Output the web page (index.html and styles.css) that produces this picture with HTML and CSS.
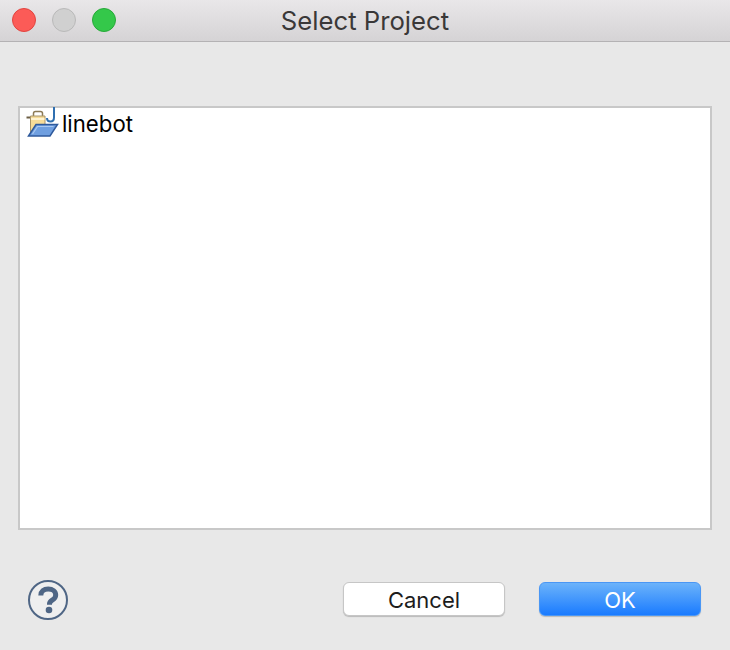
FILE: index.html
```html
<!DOCTYPE html>
<html lang="en">
<head>
    <meta charset="UTF-8">
    <title>Select Project</title>
    <link rel="stylesheet" href="styles.css">
</head>
<body>

<div class="window">
    <div class="titlebar">
        <div class="traffic">
            <span class="light red"></span>
            <span class="light grey"></span>
            <span class="light green"></span>
        </div>
        <div class="title">Select Project</div>
    </div>

    <div class="content">
        <div class="list">
            <div class="row">
                <svg class="project-icon" width="33" height="30" viewBox="0 0 33 30">
                    <path d="M28 0v10.500q0 4-3.500 4t-3.500-3.500" fill="none" stroke="#2f6fb0" stroke-width="2"/>
                    <path d="M7.500 9V6.500q0-2 2-2h5q2 0 2 2V9" fill="none" stroke="#8c7a55" stroke-width="1.500"/>
                    <path d="M0.500 10.500h5" stroke="#6d5f44" stroke-width="2"/>
                    <path d="M4.500 28V9h14.500v8" fill="#f7dc98" stroke="#a89468" stroke-width="1"/>
                    <path d="M5 12h13.500" stroke="#fff3cf" stroke-width="2"/>
                    <path d="M2.500 29 10 17.500h21.500L24 29z" fill="#6f9fe0" stroke="#2f5a9c" stroke-width="1.500"/>
                    <path d="M6.500 27 11.500 19.500h16" fill="none" stroke="#a9c8f2" stroke-width="1.200"/>
                </svg>
                <span class="row-label">linebot</span>
            </div>
        </div>
    </div>

    <div class="footer">
        <svg class="help" width="42" height="42" viewBox="0 0 42 42">
            <circle cx="21" cy="21" r="19" fill="#efefef" stroke="#4f6685" stroke-width="2"/>
            <path d="M13.800 16.500c0-4 3-6.500 7.400-6.500 4.400 0 7.500 2.400 7.500 5.900 0 2.700-1.500 4-3.500 5.300-1.900 1.200-2.700 2-2.700 3.800v.8" fill="none" stroke="#4f6685" stroke-width="5"/>
            <circle cx="22" cy="31" r="3.300" fill="#4f6685"/>
        </svg>
        <div class="buttons">
            <button class="btn">Cancel</button>
            <button class="btn primary">OK</button>
        </div>
    </div>
</div>

</body>
</html>
```

FILE: styles.css
```css
body {
    margin: 0;
    padding: 0;
    background-color: #e8e8e8;
    font-family: 'Inter', 'Liberation Sans', sans-serif;
    overflow: hidden;
}
.window {
    width: 730px;
    height: 650px;
    display: flex;
    flex-direction: column;
}
.titlebar {
    height: 42px;
    box-sizing: border-box;
    padding-bottom: 1px;
    display: flex;
    align-items: center;
    position: relative;
    background: linear-gradient(#e9e7e9, #d5d3d5);
    border-bottom: 1px solid #b4b2b4;
}
.traffic {
    display: flex;
    gap: 16px;
    padding-left: 12px;
}
.light {
    width: 24px;
    height: 24px;
    box-sizing: border-box;
    border-radius: 50%;
    border: 1px solid;
}
.red {
    background-color: #fc5b57;
    border-color: #e2443f;
}
.grey {
    background-color: #d0d0d0;
    border-color: #b9b9b9;
}
.green {
    background-color: #34c84a;
    border-color: #27a939;
}
.title {
    position: absolute;
    left: 0;
    right: 0;
    padding-top: 1px;
    text-align: center;
    font-size: 25.7px;
    color: #3a3838;
}
.content {
    padding: 64px 18px 0 18px;
}
.list {
    height: 424px;
    box-sizing: border-box;
    background-color: white;
    border: 2px solid #c8c8c8;
}
.row {
    display: flex;
    align-items: center;
    padding: 0 0 0 6px;
}
.project-icon {
    flex-shrink: 0;
    margin-top: -1px;
}
.row-label {
    margin-left: 3px;
    padding-top: 1px;
    font-size: 22.2px;
    color: #000;
}
.footer {
    display: flex;
    align-items: flex-start;
    justify-content: space-between;
    padding: 48px 29px 0 27px;
}
.help {
    margin-top: 1px;
}
.buttons {
    display: flex;
    gap: 34px;
    margin-top: 4px;
}
.btn {
    width: 162px;
    height: 34px;
    padding: 2px 0 0 0;
    border-radius: 6px;
    font-family: inherit;
    font-size: 22px;
    color: #1c1c1c;
    background-color: white;
    border: 1px solid #c6c6c6;
    box-shadow: 0 1px 1px rgba(0,0,0,0.2);
}
.primary {
    color: white;
    background: linear-gradient(#6cb3fa, #1a7bff);
    border-color: #4a97f5;
}
```
